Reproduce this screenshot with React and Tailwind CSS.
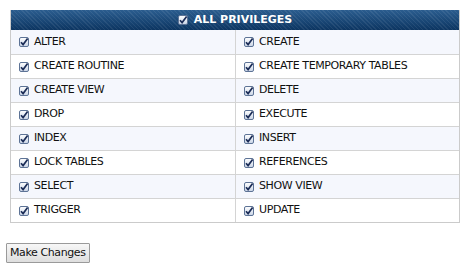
import React from 'react';

const privs = [
    ['ALTER', 'CREATE'],
    ['CREATE ROUTINE', 'CREATE TEMPORARY TABLES'],
    ['CREATE VIEW', 'DELETE'],
    ['DROP', 'EXECUTE'],
    ['INDEX', 'INSERT'],
    ['LOCK TABLES', 'REFERENCES'],
    ['SELECT', 'SHOW VIEW'],
    ['TRIGGER', 'UPDATE'],
];

function Check() {
    return (
        <svg width="10" height="10" viewBox="0 0 10 10" className="shrink-0">
            <defs>
                <linearGradient id="cb" x1="0" y1="0" x2="0" y2="1">
                    <stop offset="0" stopColor="#ffffff" />
                    <stop offset="1" stopColor="#c9d4e6" />
                </linearGradient>
            </defs>
            <rect x="0.5" y="0.5" width="9" height="9" rx="1.5" fill="url(#cb)" stroke="#5d7396" />
            <path d="M2 5.2 L4.1 7.6 L8.6 1.6" fill="none" stroke="#1b2c57" strokeWidth="1.7" />
        </svg>
    );
}

function App() {
    return (
        <div className="w-[471px] h-[266px] bg-white pt-[10px]" style={{ fontFamily: '"DejaVu Sans", Verdana, sans-serif' }}>
            <div className="ml-[10px] w-[450px] border border-[#cbcbcb] border-t-0">
                {/* header bar with faint diagonal hatch */}
                <div className="h-[20px] flex items-center justify-center gap-[6px] bg-[image:repeating-linear-gradient(45deg,rgba(255,255,255,0.07)_0px,rgba(255,255,255,0.07)_1px,transparent_1px,transparent_3px),linear-gradient(to_bottom,#2b5d8f,#0c3561)] text-white text-[11px] font-bold">
                    <Check />
                    <span>ALL PRIVILEGES</span>
                </div>
                {privs.map((row, i) => (
                    <div key={i} className={`grid grid-cols-[225px_1fr] h-[24px] ${i > 0 ? 'border-t border-[#d4d4d4]' : ''} ${i % 2 === 0 ? 'bg-[#f5f7fd]' : 'bg-white'}`}>
                        {row.map((name, j) => (
                            <div key={j} className={`flex items-center gap-[5px] pl-[8px] text-[11px] tracking-[-0.4px] text-[#111] ${j === 0 ? 'border-r border-[#d4d4d4]' : ''}`}>
                                <Check />
                                <span>{name}</span>
                            </div>
                        ))}
                    </div>
                ))}
            </div>
            <div className="mt-[20px] ml-[6px] flex">
                <button className="h-[20px] px-[3px] flex items-center border border-[#9a9a9a] bg-gradient-to-b from-[#f7f7f7] to-[#dedede] text-[11px] tracking-[-0.4px] text-[#111] rounded-[1px]">
                    Make Changes
                </button>
            </div>
        </div>
    );
}

export default App;
